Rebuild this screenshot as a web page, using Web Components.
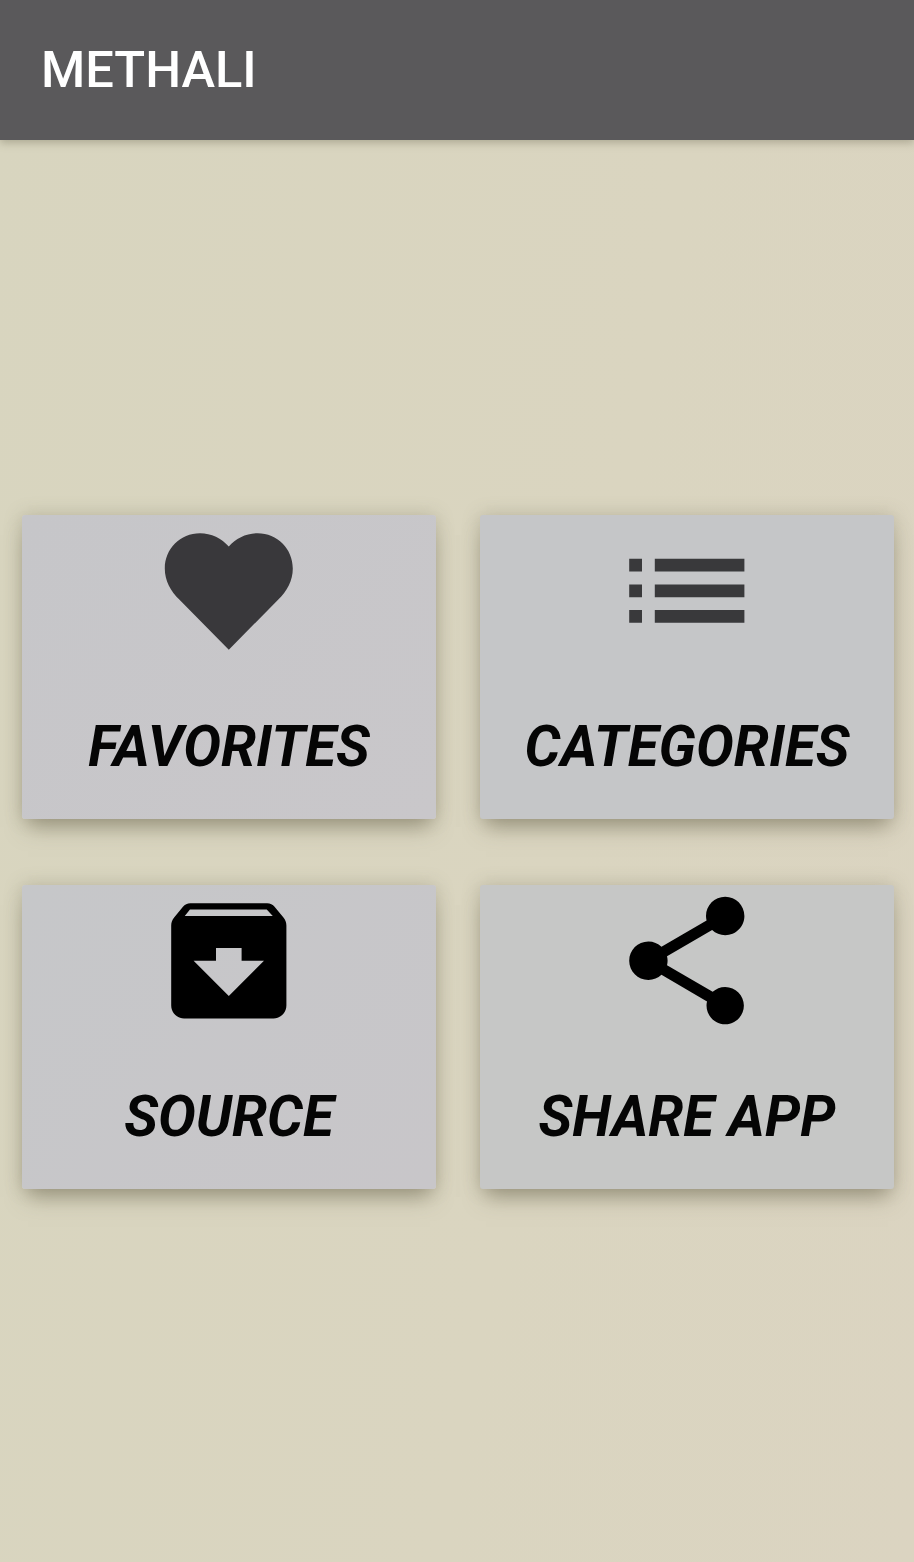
<!DOCTYPE html>
<html lang="en"><head><meta charset="utf-8"><title>METHALI</title>
<style>
html,body{margin:0;padding:0}
body{width:914px;height:1562px;overflow:hidden;font-family:Roboto,"Liberation Sans",sans-serif;background:#d9d5c0}
</style></head><body>
<app-screen>
  <app-bar slot="bar">METHALI</app-bar>
  <menu-card label="FAVORITES" icon="heart" style="--bg:linear-gradient(135deg,#c6c6c9,#c9c7ca);--ic:#39383b"></menu-card>
  <menu-card label="CATEGORIES" icon="list" style="--bg:#c5c6c8;--ic:#39393b"></menu-card>
  <menu-card label="SOURCE" icon="archive" style="--bg:linear-gradient(135deg,#c6c7c9,#c8c6c9);--ic:#000"></menu-card>
  <menu-card label="SHARE APP" icon="share" style="--bg:#c6c7c6;--ic:#000"></menu-card>
</app-screen>
<script>
class AppScreen extends HTMLElement{
  constructor(){super();this.attachShadow({mode:'open'}).innerHTML=`<style>
  :host{display:flex;flex-direction:column;width:914px;height:1562px;background:linear-gradient(100deg,#d8d5bf 0%,#dad5c0 60%,#dbd4c1 100%)}
  main{display:grid;grid-template-columns:414px 414px;column-gap:44px;row-gap:66px;padding:375px 20px 0 22px}
  </style><slot name="bar"></slot><main><slot></slot></main>`;}
}
class AppBar extends HTMLElement{
  constructor(){super();this.attachShadow({mode:'open'}).innerHTML=`<style>
  :host{display:flex;align-items:center;height:140px;box-sizing:border-box;padding:0 0 0 41px;background:#5a595b;color:#fff;font:500 50.6px/1 Roboto,sans-serif;box-shadow:0 3px 8px rgba(110,108,85,.4);position:relative;z-index:1}
  </style><slot></slot>`;}
}
const ICONS={
 heart:'M12 21.2L4.3 13.4C2.9 12 2 10.4 2 8.5 2 5.42 4.42 3 7.5 3c1.74 0 3.41.81 4.5 2.09C13.09 3.81 14.76 3 16.5 3 19.58 3 22 5.42 22 8.5c0 1.9-.9 3.5-2.3 4.9L12 21.2z',
 list:'M3 13h2v-2H3v2zm0 4h2v-2H3v2zm0-8h2V7H3v2zm4 4h14v-2H7v2zm0 4h14v-2H7v2zM7 7v2h14V7H7z',
 archive:'M20.54 5.23l-1.39-1.68C18.88 3.21 18.47 3 18 3H6c-.47 0-.88.21-1.16.55L3.46 5.23C3.17 5.57 3 6.02 3 6.5V19c0 1.1.9 2 2 2h14c1.1 0 2-.9 2-2V6.5c0-.48-.17-.93-.46-1.27zM12 17.5L6.5 12H10v-2h4v2h3.5L12 17.5zM5.12 5l.81-1h12l.94 1H5.12z',
 share:'M18 16.08c-.76 0-1.44.3-1.96.77L8.91 12.7c.05-.23.09-.46.09-.7s-.04-.47-.09-.7l7.05-4.11c.54.5 1.25.81 2.04.81 1.66 0 3-1.34 3-3s-1.34-3-3-3-3 1.34-3 3c0 .24.04.47.09.7L8.04 9.81C7.5 9.31 6.79 9 6 9c-1.66 0-3 1.34-3 3s1.34 3 3 3c.79 0 1.5-.31 2.04-.81l7.12 4.16c-.05.21-.08.43-.08.65 0 1.61 1.31 2.92 2.92 2.92 1.61 0 2.92-1.31 2.92-2.92s-1.31-2.92-2.92-2.92z'
};
class MenuCard extends HTMLElement{
  constructor(){super();this.attachShadow({mode:'open'});}
  connectedCallback(){
    this.shadowRoot.innerHTML=`<style>
    :host{display:flex;flex-direction:column;align-items:center;width:414px;height:304px;border-radius:3px;background:var(--bg);box-shadow:0 14px 20px -6px rgba(105,100,75,.5),0 0 18px rgba(125,122,95,.32)}
    svg{display:block;width:153.6px;height:153.6px;margin-top:-1px;fill:var(--ic);flex:none}
    span{margin-top:47px;font:italic 700 56.5px/64px Roboto,sans-serif;color:#050505;white-space:nowrap}
    </style><svg viewBox="0 0 24 24" aria-hidden="true"><path d="${ICONS[this.getAttribute('icon')]}"/></svg><span>${this.getAttribute('label')}</span>`;
  }
}
customElements.define('app-screen',AppScreen);
customElements.define('app-bar',AppBar);
customElements.define('menu-card',MenuCard);
</script>
</body></html>
